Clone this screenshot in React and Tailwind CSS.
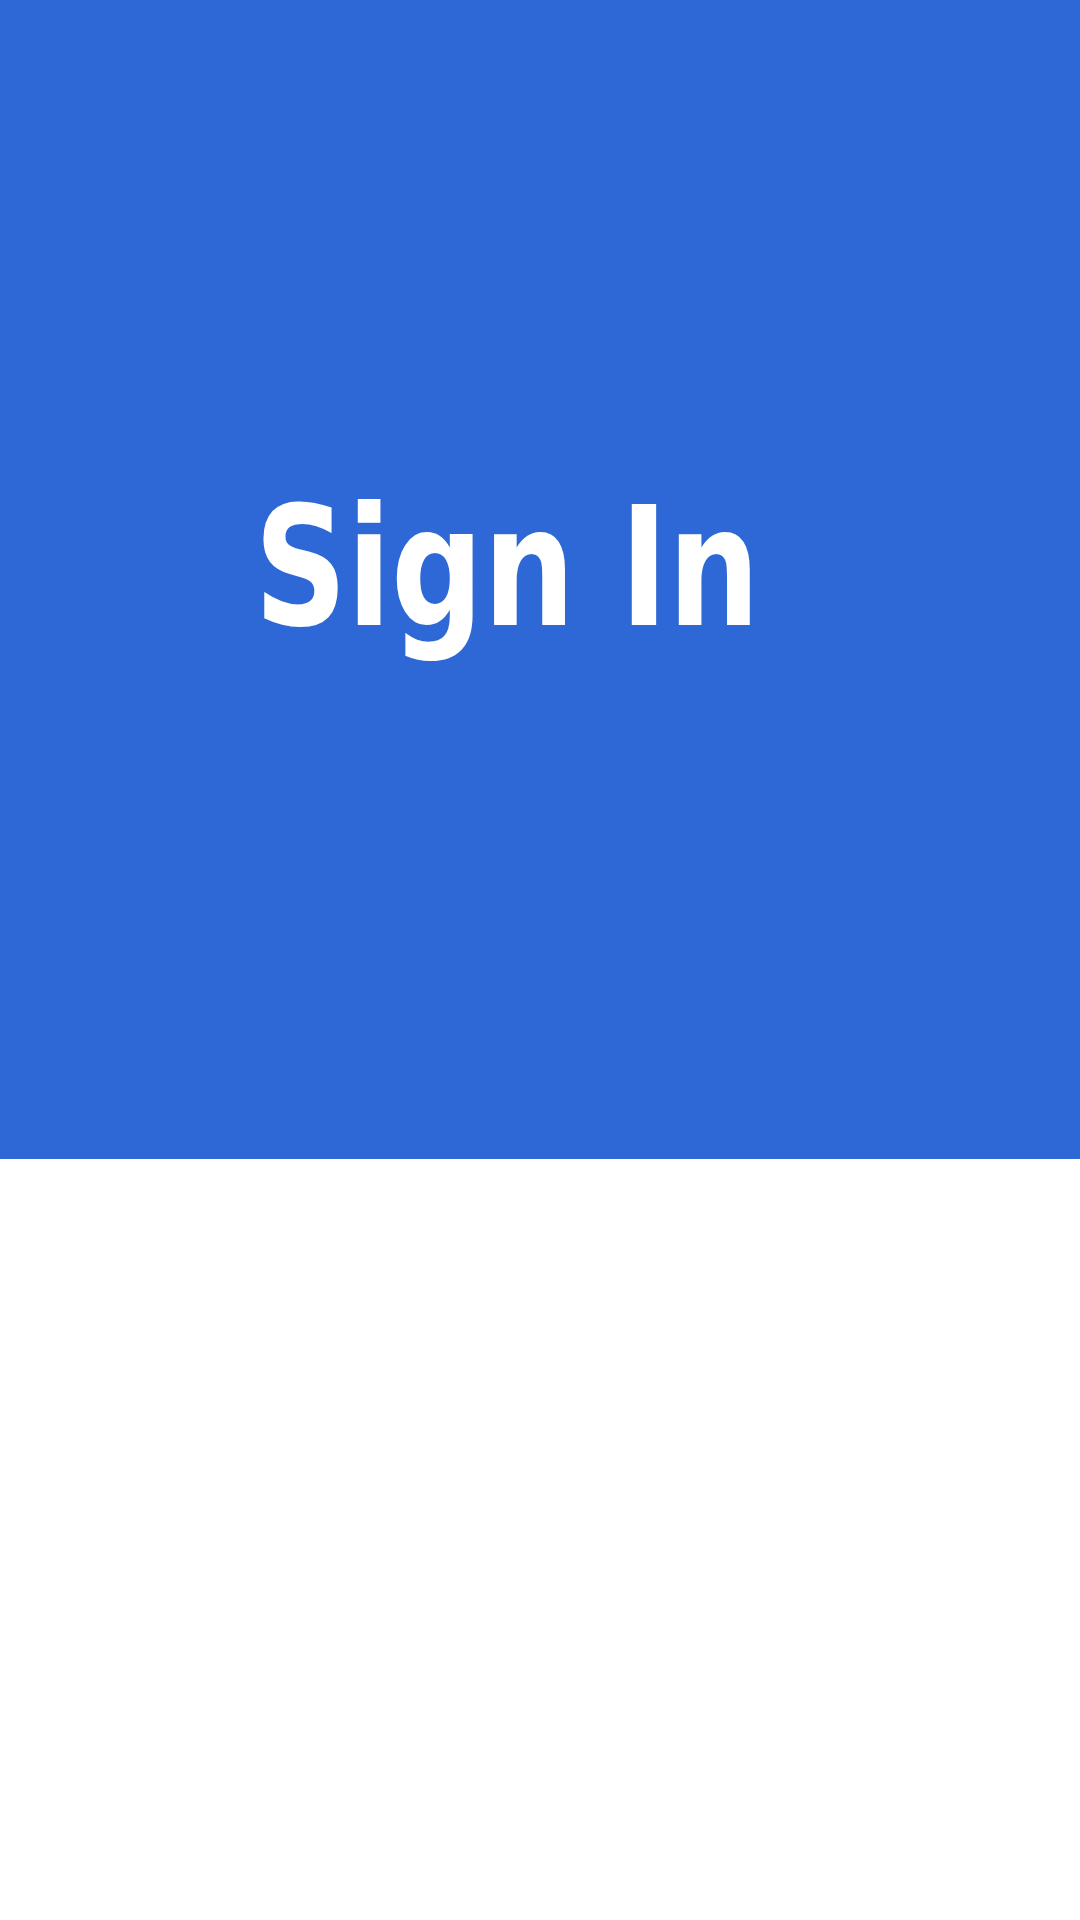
export default function App() {
  return (
    <div className="w-[1080px] h-[1920px] bg-white">
      <div className="h-[1159px] bg-[#2e67d6] flex items-center justify-center pr-[67px] pb-[24px]">
        <h1
          className="text-white font-bold text-[166px] leading-none whitespace-nowrap scale-x-[0.863]"
          style={{ fontFamily: '"DejaVu Sans Condensed", "DejaVu Sans", sans-serif' }}
        >
          Sign In
        </h1>
      </div>
    </div>
  );
}
